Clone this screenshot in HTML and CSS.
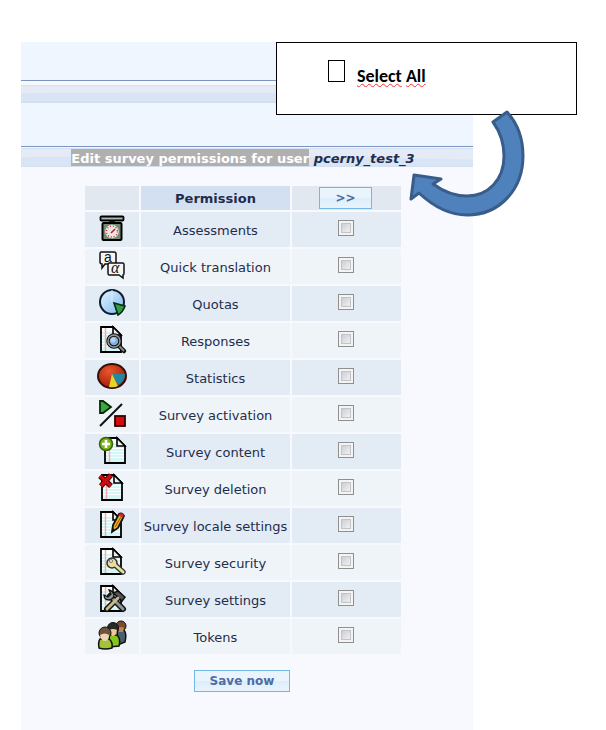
FILE: index.html
```html
<!DOCTYPE html>
<html lang="en">

<head>
    <meta charset="utf-8">
    <title>Edit survey permissions</title>
    <link rel="stylesheet" href="styles.css">
</head>

<body>
    <svg class="defs" width="0" height="0" aria-hidden="true">
        <defs>
            <symbol id="page" viewBox="0 0 28 28">
                <path d="M3 2h12l8 8v17H3z" fill="#fff" stroke="#000" stroke-width="1.8" />
                <path d="M4 8h10M4 11h18M4 14h18M4 17h18M4 20h18M4 23h18M4 25h18" stroke="#a9edf0" />
                <path d="M7.5 3v23" stroke="#f3a9ad" stroke-width="1.5" />
                <path d="M15 2v8h8z" fill="#eee" stroke="#000" stroke-width="1.6" />
            </symbol>
            <linearGradient id="lens" x1="0" y1="0" x2="1" y2="1">
                <stop offset="0" stop-color="#e8f6ff" />
                <stop offset="1" stop-color="#77b7ee" />
            </linearGradient>
            <radialGradient id="red" cx=".4" cy=".3" r=".8">
                <stop offset="0" stop-color="#e8562c" />
                <stop offset="1" stop-color="#a01505" />
            </radialGradient>
        </defs>
    </svg>

    <main class="panel">
        <div class="menu"></div>
        <div class="bar"></div>
        <div class="menu menu-low"></div>
        <h1 class="bar title"><mark>Edit survey permissions for user</mark> <em>pcerny_test_3</em></h1>

        <form>
            <table class="permissions">
                <tr>
                    <th></th>
                    <th class="name">Permission</th>
                    <th><button type="button">&gt;&gt;</button></th>
                </tr>
                <tr>
                    <td>
                        <svg viewBox="0 0 28 28">
                            <path d="M11 6h6v4h-6z" fill="#333" />
                            <rect x="2.5" y="2.5" width="23" height="4" rx="1" fill="#a9b9ad" stroke="#000" stroke-width="1.8" />
                            <rect x="4.5" y="9" width="19" height="17" rx="1" fill="#748875" stroke="#000" stroke-width="2" />
                            <circle cx="14" cy="17.5" r="6.8" fill="#e6e9e6" />
                            <circle cx="14" cy="17.5" r="5.5" fill="none" stroke="#c22" stroke-width="1.3" stroke-dasharray="1 1.9" />
                            <path d="M13 19l4-4" stroke="#c11" stroke-width="1.5" />
                        </svg>
                    </td>
                    <td><label for="assessments">Assessments</label></td>
                    <td><input type="checkbox" id="assessments"></td>
                </tr>
                <tr>
                    <td>
                        <svg viewBox="0 0 28 28">
                            <path d="M3 1h13q2 0 2 2v8q0 2-2 2H7l-3 4v-4q-2 0-2-2V3q0-2 1-2z" fill="#f5f5f5" stroke="#111" stroke-width="1.5" />
                            <path d="M11 12h14q1 0 1 2v8q0 2-1 2v3l-4-3H11q-1 0-1-2v-8q0-2 1-2z" fill="#f5f5f5" stroke="#111" stroke-width="1.5" />
                            <text x="6" y="11" class="glyph">a</text>
                            <text x="13" y="22" class="glyph greek">α</text>
                        </svg>
                    </td>
                    <td><label for="translation">Quick translation</label></td>
                    <td><input type="checkbox" id="translation"></td>
                </tr>
                <tr>
                    <td>
                        <svg viewBox="0 0 28 28">
                            <circle cx="14" cy="14" r="12" fill="url(#lens)" stroke="#0c1c30" stroke-width="2" />
                            <path d="M14 14V2" stroke="#d9eeff" />
                            <path d="M16 15l11 3q-2 6-7 9z" fill="#2f9e45" stroke="#052b0b" stroke-width="1.6" />
                        </svg>
                    </td>
                    <td><label for="quotas">Quotas</label></td>
                    <td><input type="checkbox" id="quotas"></td>
                </tr>
                <tr>
                    <td>
                        <svg viewBox="0 0 28 28">
                            <use href="#page" />
                            <path d="M20 20l6 6" stroke="#111" stroke-width="4.5" stroke-linecap="round" />
                            <path d="M20 20l6 6" stroke="#888" stroke-width="2" />
                            <circle cx="16" cy="16" r="6" fill="#83aee0" stroke="#111" stroke-width="3.5" />
                            <circle cx="16" cy="16" r="6" fill="none" stroke="#999" stroke-width="1.5" />
                            <circle cx="15" cy="15" r="2.5" fill="#b5d1f2" />
                        </svg>
                    </td>
                    <td><label for="responses">Responses</label></td>
                    <td><input type="checkbox" id="responses"></td>
                </tr>
                <tr>
                    <td>
                        <svg viewBox="0 0 28 28">
                            <ellipse cx="14" cy="14" rx="14" ry="12" fill="url(#red)" stroke="#331008" stroke-width="2" />
                            <path d="M14 12h13q0 7-7 11z" fill="#2388a8" />
                            <path d="M14 12l6 12q-4 2-9 1z" fill="#e5d52a" />
                        </svg>
                    </td>
                    <td><label for="statistics">Statistics</label></td>
                    <td><input type="checkbox" id="statistics"></td>
                </tr>
                <tr>
                    <td>
                        <svg viewBox="0 0 28 28">
                            <path d="M2 2h3l8 6-8 6H2z" fill="#38a93f" stroke="#062a08" stroke-width="1.8" />
                            <path d="M2 27L24 5" stroke="#111" stroke-width="2" />
                            <rect x="17" y="17" width="10" height="10" fill="#d50c0c" stroke="#300" stroke-width="1.8" />
                        </svg>
                    </td>
                    <td><label for="activation">Survey activation</label></td>
                    <td><input type="checkbox" id="activation"></td>
                </tr>
                <tr>
                    <td>
                        <svg viewBox="0 0 28 28">
                            <use href="#page" x="4" y="0" />
                            <circle cx="8" cy="8" r="6.5" fill="#7cb51c" stroke="#3c6107" stroke-width="1.5" />
                            <path d="M8 4v8M4 8h8" stroke="#fff" stroke-width="2.6" />
                        </svg>
                    </td>
                    <td><label for="content">Survey content</label></td>
                    <td><input type="checkbox" id="content"></td>
                </tr>
                <tr>
                    <td>
                        <svg viewBox="0 0 28 28">
                            <use href="#page" x="1" y="0" />
                            <path d="M2 3l11 10M13 2L3 13" stroke="#400" stroke-width="5.5" />
                            <path d="M2 3l11 10M13 2L3 13" stroke="#c90d12" stroke-width="3.5" />
                        </svg>
                    </td>
                    <td><label for="deletion">Survey deletion</label></td>
                    <td><input type="checkbox" id="deletion"></td>
                </tr>
                <tr>
                    <td>
                        <svg viewBox="0 0 28 28">
                            <use href="#page" />
                            <path d="M14 22l1-7 6-11q3-2 5 2l-6 12z" fill="#edae28" stroke="#111" stroke-width="1.8" />
                            <path d="M17 17l6-10" stroke="#8d5b0a" />
                            <path d="M20 5l5 3 1-3-3-2z" fill="#cf2929" />
                            <path d="M14 22l1-4 2 2z" fill="#111" />
                        </svg>
                    </td>
                    <td><label for="locale">Survey locale settings</label></td>
                    <td><input type="checkbox" id="locale"></td>
                </tr>
                <tr>
                    <td>
                        <svg viewBox="0 0 28 28">
                            <use href="#page" />
                            <path d="M16 17l9 8" stroke="#333" stroke-width="5.5" stroke-linecap="round" />
                            <circle cx="14" cy="16" r="5" fill="#e7dd9c" stroke="#333" stroke-width="1.5" />
                            <path d="M16 17l9 8" stroke="#e7dd9c" stroke-width="3" stroke-linecap="round" />
                            <circle cx="13" cy="14" r="1.5" fill="#fff" stroke="#555" stroke-width=".8" />
                        </svg>
                    </td>
                    <td><label for="security">Survey security</label></td>
                    <td><input type="checkbox" id="security"></td>
                </tr>
                <tr>
                    <td>
                        <svg viewBox="0 0 28 28">
                            <use href="#page" />
                            <path d="M12 12l13 13M21 13L9 25" stroke="#111" stroke-width="6" stroke-linecap="round" />
                            <path d="M15 9l5-2 7 6-3 4-4-4z" fill="#555" stroke="#111" stroke-width="1.5" />
                            <path d="M12 12l13 13" stroke="#8f9597" stroke-width="3" stroke-linecap="round" />
                            <path d="M20 14L9 25" stroke="#c9ba84" stroke-width="3" stroke-linecap="round" />
                            <path d="M11 6l2 4-3 3-4-2q0 5 5 5 5-1 5-5-1-4-5-5z" fill="#8f9597" stroke="#111" stroke-width="1.3" />
                        </svg>
                    </td>
                    <td><label for="settings">Survey settings</label></td>
                    <td><input type="checkbox" id="settings"></td>
                </tr>
                <tr>
                    <td>
                        <svg viewBox="0 0 28 28">
                            <path d="M19 9h7q3 4 1 12l-7 3z" fill="#49606c" stroke="#111" stroke-width="1.5" />
                            <circle cx="23" cy="5" r="5" fill="#76502e" stroke="#111" />
                            <path d="M20 7q3-2 6 0l-1 4h-4z" fill="#bd8558" />
                            <path d="M11 14h8q4 4 2 11l-9 1z" fill="#83c719" stroke="#111" stroke-width="1.5" />
                            <circle cx="15" cy="7" r="5.5" fill="#292929" stroke="#111" />
                            <path d="M11 9q4-2 8 0-1 6-4 6t-4-6z" fill="#efc799" />
                            <path d="M2 18h9q4 3 3 9-7 2-13 0-1-6 1-9z" fill="#a3c43a" stroke="#111" stroke-width="1.5" />
                            <circle cx="7" cy="12" r="6" fill="#70543a" stroke="#111" />
                            <path d="M2 14q5-3 9 0 0 6-4 6t-5-6z" fill="#f1d3b0" />
                        </svg>
                    </td>
                    <td><label for="tokens">Tokens</label></td>
                    <td><input type="checkbox" id="tokens"></td>
                </tr>
            </table>
            <button type="submit" class="save">Save now</button>
        </form>
    </main>

    <div class="callout">
        <input type="checkbox" id="selectAll">
        <label for="selectAll"><span>Select</span> <span>All</span></label>
    </div>
    <svg class="arrow" viewBox="0 0 118 112" aria-hidden="true">
        <path d="M99 4L85 14C93 25 96 36 96 48C96 72 80 88 59 88C47 88 36 84 25 76L33 71L6 67L3 91L11 85C26 99 42 107 59 107C92 107 115 81 115 48C115 32 110 16 99 4z" />
    </svg>
</body>

</html>
```

FILE: styles.css
```css
body {
    margin: 0;
    padding: 42px 133px 0 21px;
    background-color: #fff;
    color: #1f2d4d;
    font-family: "DejaVu Sans", Verdana, sans-serif;
    font-size: 13px;
}

.defs {
    position: absolute;
}

.panel {
    background-color: #f8f9ff;
    padding-bottom: 38px;
}

.menu {
    height: 38px;
    margin-bottom: 4px;
    background-color: #eff6ff;
    border-bottom: 1px solid #7b95c0;
}

.menu-low {
    height: 43px;
    margin-bottom: 1px;
}

.bar {
    box-sizing: border-box;
    height: 18px;
    border-top: 1px solid #d2e0f0;
    border-bottom: 2px solid #d2e0f0;
    background: radial-gradient(ellipse 90% 60% at 35% 100%, #d9e5f4 90%, #e4ebf6 100%);
}

.title {
    height: 19px;
    margin: 0 0 19px;
    padding-right: 8px;
    border-bottom-width: 1px;
    font-size: 13px;
    line-height: 19px;
    text-align: center;
    white-space: nowrap;
}

.title mark {
    display: inline-block;
    height: 17px;
    background-color: #b0b0b0;
    color: #fff;
}

form {
    padding-right: 8px;
    text-align: center;
}

.permissions {
    margin: -2px auto 14px;
    border-spacing: 2px;
}

th, td {
    padding: 0;
    text-align: center;
    white-space: nowrap;
}

th {
    height: 24px;
    background-color: #e1e8ef;
}

th:nth-child(1) {
    width: 54px;
}

th:nth-child(2) {
    width: 149px;
}

th:nth-child(3) {
    width: 109px;
}

th.name {
    background-color: #d2e0f2;
}

td {
    height: 35px;
    background-color: #eef4f8;
}

tr:nth-child(even) td {
    background-color: #e3ebf5;
}

td label {
    display: block;
    padding-top: 2px;
}

td svg {
    display: block;
    width: 28px;
    height: 28px;
    margin: 0 auto 3px;
    fill: none;
    overflow: visible;
}

.glyph {
    font-family: "Liberation Sans", sans-serif;
    font-size: 14px;
    fill: #111;
}

.greek {
    font-family: "Liberation Serif", serif;
    font-size: 16px;
    font-style: italic;
}

button {
    height: 22px;
    padding: 0 15px;
    border: 1px solid #74b6e4;
    background: linear-gradient(#e9f4fd 50%, #dceefa 50%, #e9f4fd);
    color: #4f6ca5;
    font-family: inherit;
    font-size: 12px;
    font-weight: bold;
}

th:nth-child(3), td:nth-child(3) {
    box-sizing: border-box;
    padding-right: 2px;
}

th button {
    display: block;
    margin: 0 auto;
}

td input {
    display: block;
    appearance: none;
    width: 16px;
    height: 16px;
    margin: 0 auto 3px;
    border: 1px solid #8e8f8f;
    background: linear-gradient(135deg, #c6cad3, #f5f5f5) content-box, #f4f4f4;
    padding: 2px;
    outline: 1px solid #c3c3c3;
    outline-offset: -4px;
}

.save {
    margin-right: 2px;
}

.callout {
    position: absolute;
    top: 42px;
    left: 276px;
    right: 29px;
    display: flex;
    align-items: center;
    gap: 12px;
    box-sizing: border-box;
    height: 73px;
    padding: 0 0 16px 51px;
    border: 1px solid #000;
    background-color: #fff;
    color: #000;
    font-family: Calibri, Lato, sans-serif;
    font-size: 18px;
    font-weight: bold;
}

.callout input {
    appearance: none;
    width: 17px;
    height: 22px;
    margin: 0;
    border: 1px solid #000;
}

.callout label {
    padding-top: 10px;
}

.callout span {
    text-decoration: underline wavy #e33 1px;
    text-underline-offset: 1px;
}

.arrow {
    position: absolute;
    top: 108px;
    left: 408px;
    width: 118px;
    height: 112px;
    fill: #4f81bd;
    stroke: #385d8a;
    stroke-width: 3;
    stroke-linejoin: round;
}
```
